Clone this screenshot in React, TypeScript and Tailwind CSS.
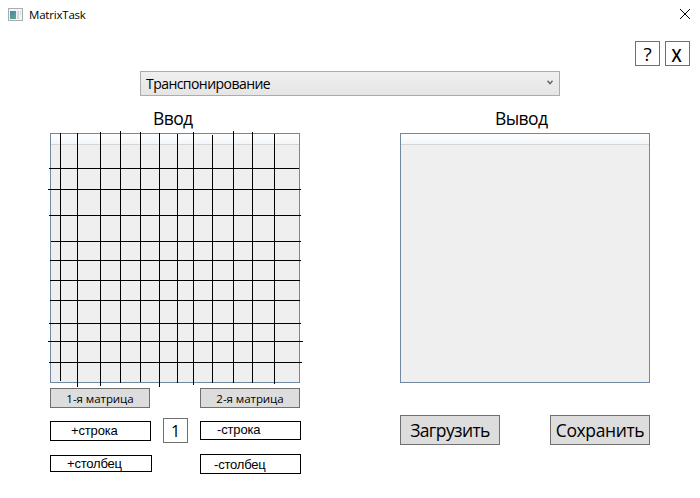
import React from 'react';

const verticals = [
  [60, 133, 381], [77, 133, 387], [100, 132, 386], [120, 131, 383],
  [140, 132, 382], [159, 133, 387], [177, 134, 383], [193, 132, 385],
  [212, 135, 383], [233, 131, 383], [252, 132, 383], [274, 134, 384],
];

const horizontals = [
  [168, 49, 299], [189, 48, 301], [215, 49, 301], [241, 51, 301], [260, 50, 301],
  [280, 50, 300], [300, 50, 300], [323, 49, 301], [341, 48, 303], [362, 49, 302],
];

function AppIcon() {
  return (
    <svg className="block" width="15" height="13" viewBox="0 0 15 13">
      <defs>
        <linearGradient id="pane" x1="0" y1="0" x2="0.6" y2="1">
          <stop offset="0" stopColor="#4a86a8" />
          <stop offset="1" stopColor="#5aa58c" />
        </linearGradient>
      </defs>
      <rect x="0.5" y="0.5" width="14" height="12" fill="#f2f4f5" stroke="#a7adb0" />
      <rect x="2" y="3" width="6" height="8" fill="url(#pane)" />
      <rect x="9" y="3" width="2" height="8" fill="#d3dadd" />
      <rect x="12" y="3" width="1" height="4" fill="#d3dadd" />
    </svg>
  );
}

function Panel({ children }: { children?: React.ReactNode }) {
  return (
    <div className="relative h-[250px] w-[250px] border border-[#7088a0] bg-[#efefef]">
      <div className="h-[11px] border-b border-[#d3d5da] bg-gradient-to-b from-white to-[#f3f6fa]" />
      {children}
    </div>
  );
}

function GridLines() {
  return (
    <svg className="absolute -left-[6px] -top-[6px]" width="264" height="264" viewBox="45 128 264 264" shapeRendering="crispEdges">
      {verticals.map(([x, a, b]) => <rect key={x} x={x} y={a} width="1" height={b - a} />)}
      {horizontals.map(([y, a, b]) => <rect key={y} x={a} y={y} width={b - a} height="1" />)}
    </svg>
  );
}

export default function App() {
  return (
    <div className="h-[498px] w-[700px] overflow-hidden bg-white font-['Open_Sans','Noto_Sans',sans-serif] text-black">
      <header className="flex h-[28px] items-center justify-between pl-2 pr-[10px]">
        <div className="flex items-center gap-[6px]">
          <AppIcon />
          <span className="pt-px text-[11.5px] leading-none tracking-[-0.2px]">MatrixTask</span>
        </div>
        <svg className="block" width="10" height="10" viewBox="0 0 10 10" stroke="#000" strokeWidth="1">
          <path d="M0 0 10 10M10 0 0 10" />
        </svg>
      </header>

      <div className="flex justify-end gap-[5px] pr-[10px] pt-[13px]">
        <button className="flex h-[25px] w-[25px] items-center justify-center border border-[#707070] pt-[2px] text-[19px] leading-none">?</button>
        <button className="flex h-[25px] w-[25px] items-center justify-center border border-[#707070] pr-px pt-[2px] text-[18px] font-semibold leading-none"><span className="scale-x-90">X</span></button>
      </div>

      <div className="mx-[140px] mt-[5px] flex h-[25px] items-center justify-between border border-[#acacac] bg-gradient-to-b from-[#f0f0f0] to-[#e5e5e5] pl-[5px] pr-[6px]">
        <span className="pt-px text-[14px] leading-none tracking-[-0.55px]">Транспонирование</span>
        <svg className="mb-[2px] block" width="6" height="5" viewBox="0 0 6 5" fill="none" stroke="#606060" strokeWidth="1.4">
          <path d="M.5 .7 3 3.6 5.5 .7" />
        </svg>
      </div>

      <div className="flex h-[37px] gap-[100px] px-[50px] pt-[12px] text-[17.5px] leading-[20px] tracking-[-0.6px]">
        <h2 className="w-[250px] pl-[103px]">Ввод</h2>
        <h2 className="w-[250px] pl-[95px]">Вывод</h2>
      </div>

      <div className="flex gap-[100px] px-[50px]">
        <Panel><GridLines /></Panel>
        <Panel />
      </div>

      <div className="flex gap-[99px] px-[50px] pt-[5px]">
        <div className="w-[251px]">
          <div className="flex gap-[50px] text-[11.5px] leading-none tracking-[-0.05px]">
            <button className="h-[20px] w-[100px] border border-[#707070] bg-[#ddd] pt-[2px]">1-я матрица</button>
            <button className="h-[20px] w-[100px] border border-[#707070] bg-[#ddd] pt-[2px]">2-я матрица</button>
          </div>
          <div className="mt-[10px] flex h-[25px] items-start font-['Liberation_Sans',sans-serif] text-[13px] leading-none tracking-[-0.15px]">
            <div className="mt-[3px] h-[20px] w-[101px] border border-black pl-[20px] pt-[2px]">+строка</div>
            <div className="ml-[12px] flex h-[25px] w-[25px] items-center justify-center border border-[#707070] font-['Open_Sans',sans-serif] text-[16px]">1</div>
            <div className="ml-[12px] mt-[3px] h-[19px] w-[101px] border border-black pl-[16px] pt-px">-строка</div>
          </div>
          <div className="mt-[11px] flex items-start gap-[48px] font-['Liberation_Sans',sans-serif] text-[13px] leading-none tracking-[-0.2px]">
            <div className="mt-px h-[17px] w-[102px] border border-black pl-[16px] pt-[1px]">+столбец</div>
            <div className="h-[20px] w-[101px] border border-black pl-[13px] pt-[3px]">-столбец</div>
          </div>
        </div>
        <div className="flex gap-[50px] pt-[27px] text-[17.5px] leading-none tracking-[-0.6px]">
          <button className="h-[30px] w-[100px] whitespace-nowrap border border-[#707070] bg-[#ddd] pt-[2px]">Загрузить</button>
          <button className="h-[30px] w-[100px] whitespace-nowrap border border-[#707070] bg-[#ddd] pt-[2px]"><span className="tracking-[-0.4px]">Сохранить</span></button>
        </div>
      </div>
    </div>
  );
}
